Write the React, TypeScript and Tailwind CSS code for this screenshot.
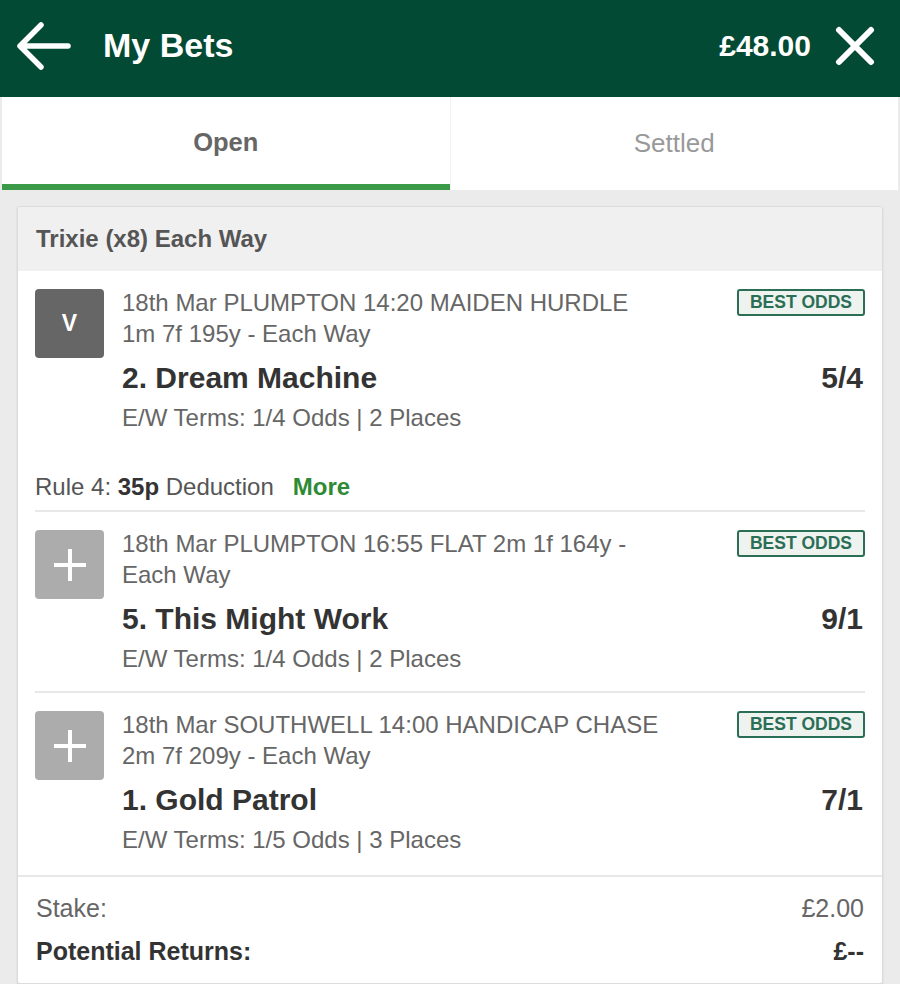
import React from "react";

const font = { fontFamily: '"Liberation Sans", Arial, sans-serif' };

function Badge() {
  return (
    <div className="mt-[2px] flex h-[27px] w-[128px] shrink-0 items-center justify-center rounded-[3px] border-2 border-[#2b6e56] bg-[#eef3f0] text-[17.5px] font-bold leading-none text-[#2b6e56]">
      BEST ODDS
    </div>
  );
}

function Box({ kind }: { kind: "v" | "plus" }) {
  if (kind === "v") {
    return (
      <div className="mt-[2px] flex h-[69px] w-[69px] shrink-0 items-center justify-center rounded-[4px] bg-[#666666] text-[23px] font-bold text-white">
        V
      </div>
    );
  }
  return (
    <div className="mt-[2px] flex h-[69px] w-[69px] shrink-0 items-center justify-center rounded-[4px] bg-[#acacac]">
      <svg width="34" height="34" viewBox="0 0 34 34">
        <path d="M17 1 V33 M1 17 H33" stroke="white" strokeWidth="4" />
      </svg>
    </div>
  );
}

function Selection({
  kind,
  lines,
  name,
  odds,
  terms,
}: {
  kind: "v" | "plus";
  lines: string[];
  name: string;
  odds: string;
  terms: string;
}) {
  return (
    <div className="flex gap-[18px]">
      <Box kind={kind} />
      <div className="flex-1">
        <div className="flex items-start justify-between">
          <div className="text-[24px] leading-[31px] text-[#666666]">
            {lines.map((l) => (
              <div key={l}>{l}</div>
            ))}
          </div>
          <Badge />
        </div>
        <div className="mt-[9px] flex items-center justify-between text-[30px] font-bold leading-[40px] text-[#333333]">
          <span>{name}</span>
          <span className="pr-[2px]">{odds}</span>
        </div>
        <div className="mt-[4px] text-[24px] leading-[31px] text-[#666666]">{terms}</div>
      </div>
    </div>
  );
}

export default function App() {
  return (
    <div className="min-h-[984px] w-[900px] bg-[#ebebeb]" style={font}>
      <div className="flex h-[97px] items-center bg-[#024a33] pb-[6px] pl-[15px] pr-[25px] text-white">
        <svg width="56" height="50" viewBox="0 0 56 50" className="shrink-0">
          <path
            d="M53 25 H5 M26 4 L5 25 L26 46"
            stroke="white"
            strokeWidth="5.5"
            fill="none"
            strokeLinecap="round"
            strokeLinejoin="round"
          />
        </svg>
        <div className="ml-[32px] text-[34px] font-bold">My Bets</div>
        <div className="ml-auto text-[30px] font-bold">£48.00</div>
        <svg width="40" height="40" viewBox="0 0 40 40" className="ml-[24px] shrink-0">
          <path
            d="M4 4 L36 36 M36 4 L4 36"
            stroke="white"
            strokeWidth="6"
            strokeLinecap="round"
          />
        </svg>
      </div>

      <div className="flex h-[93px] px-[2px]">
        <div className="flex flex-1 flex-col bg-white">
          <div className="flex flex-1 items-center justify-center pt-[3px] text-[25.5px] font-bold text-[#666666]">
            Open
          </div>
          <div className="h-[6px] bg-[#3a9a47]" />
        </div>
        <div className="w-px bg-[#f2f2f2]" />
        <div className="flex flex-1 items-center justify-center bg-white pt-[-3px] text-[26px] text-[#999999]">
          Settled
        </div>
      </div>

      <div className="mx-[17px] mt-[16px] overflow-hidden rounded-[3px] border border-[#dcdcdc] bg-white shadow-[0_1px_2px_rgba(0,0,0,0.12)]">
        <div className="flex h-[64px] items-center bg-[#f0f0f0] px-[18px] text-[24px] font-bold text-[#555555]">
          Trixie (x8) Each Way
        </div>

        <div className="px-[17px]">
          <div className="pt-[16px]">
            <Selection
              kind="v"
              lines={["18th Mar PLUMPTON 14:20 MAIDEN HURDLE", "1m 7f 195y - Each Way"]}
              name="2. Dream Machine"
              odds="5/4"
              terms="E/W Terms: 1/4 Odds | 2 Places"
            />
            <div className="mt-[38px] mb-[8px] text-[24px] leading-[31px] text-[#555555]">
              Rule 4: <span className="font-bold text-[#333333]">35p</span> Deduction
              <span className="ml-[19px] font-bold text-[#2e8b34]">More</span>
            </div>
          </div>
          <div className="h-[2px] bg-[#e8e8e8]" />
          <div className="pt-[16px] pb-[17px]">
            <Selection
              kind="plus"
              lines={["18th Mar PLUMPTON 16:55 FLAT 2m 1f 164y -", "Each Way"]}
              name="5. This Might Work"
              odds="9/1"
              terms="E/W Terms: 1/4 Odds | 2 Places"
            />
          </div>
          <div className="h-[2px] bg-[#e8e8e8]" />
          <div className="pt-[16px] pb-[20px]">
            <Selection
              kind="plus"
              lines={["18th Mar SOUTHWELL 14:00 HANDICAP CHASE", "2m 7f 209y - Each Way"]}
              name="1. Gold Patrol"
              odds="7/1"
              terms="E/W Terms: 1/5 Odds | 3 Places"
            />
          </div>
        </div>

        <div className="h-[2px] bg-[#e8e8e8]" />
        <div className="px-[18px] pt-[16px] pb-[16px]">
          <div className="flex justify-between text-[25px] leading-[31px] text-[#666666]">
            <span>Stake:</span>
            <span>£2.00</span>
          </div>
          <div className="mt-[12px] flex justify-between text-[25px] font-bold leading-[31px] text-[#333333]">
            <span>Potential Returns:</span>
            <span>£--</span>
          </div>
        </div>
      </div>
    </div>
  );
}
